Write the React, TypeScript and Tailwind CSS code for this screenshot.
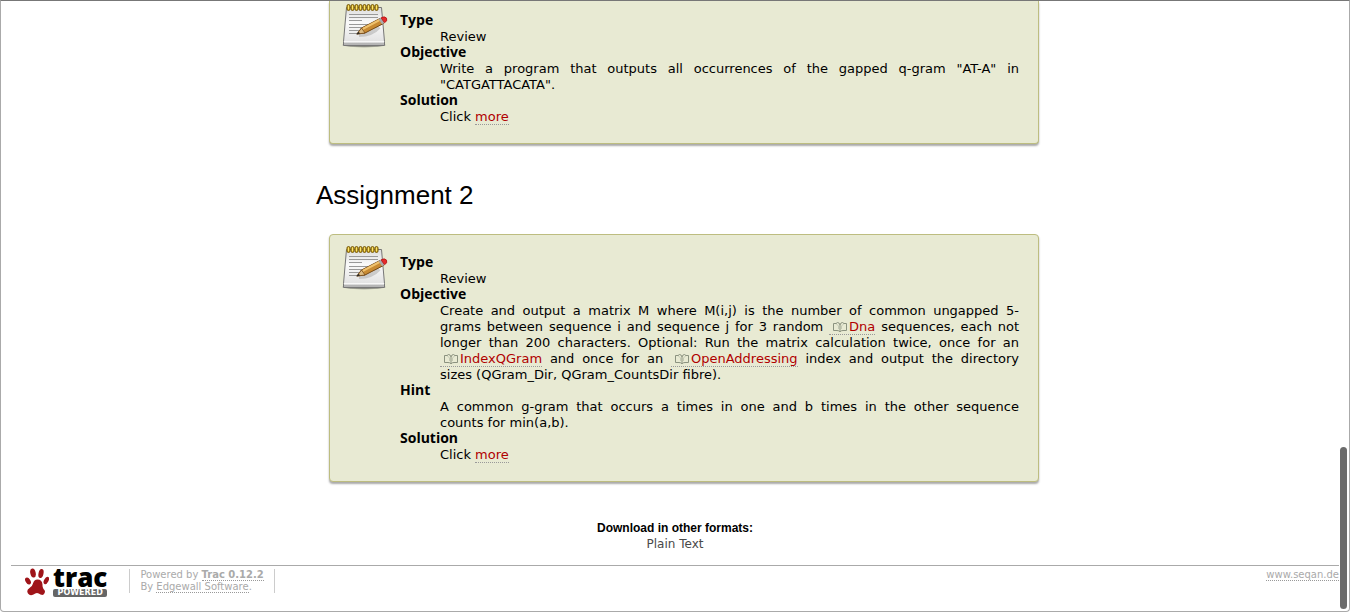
import React from "react";

const linkClass = "border-b border-dotted border-[#999] text-[#b00000]";

function NotepadIcon() {
  return (
    <svg className="h-12 w-12 shrink-0" viewBox="0 0 48 48" aria-hidden="true">
      <defs>
        <linearGradient id="paper" x1="0" y1="0" x2="0" y2="1">
          <stop offset="0" stopColor="#dcdcdc" />
          <stop offset="0.4" stopColor="#fafafa" />
          <stop offset="1" stopColor="#dedede" />
        </linearGradient>
        <radialGradient id="shade">
          <stop offset="0" stopColor="#222" stopOpacity="0.8" />
          <stop offset="0.8" stopColor="#444" stopOpacity="0.4" />
          <stop offset="1" stopColor="#555" stopOpacity="0" />
        </radialGradient>
      </defs>
      <ellipse cx="24" cy="42" rx="23" ry="2.8" fill="url(#shade)" />
      <path d="M6.5 4.500H41.500L44.500 38.500V42.500H3.500V38.500Z" fill="url(#paper)" stroke="#777" />
      <path d="M4 39.500H44V42H4Z" fill="#b5b5b5" />
      <path d="M4 38.800H44" stroke="#fff" />
      <path d="M9 11.500H38M9 14.500H38M9 17.500H22M9 21.500H36M9 24.500H32M9 27.500H24M9 30.500H18" stroke="#999" />
      <path d="M19 32Q32 32 39 24" stroke="#777" strokeOpacity=".3" strokeWidth="4" fill="none" />
      <path d="M17 31L21.500 25L40 15.500L43.500 20.500L25 30Z" fill="#c88a32" stroke="#704411" />
      <path d="M22.500 26L39.500 17" stroke="#efc16d" strokeWidth="2" />
      <path d="M17 31L21.500 25L25 30Z" fill="#dfbc80" stroke="#704411" strokeWidth=".7" />
      <path d="M16 31.500L18.800 28.700L20 30.500Z" fill="#222" />
      <path d="M38.500 16L41 14.800L44.500 19.800L42 21.300Z" fill="#aaa" />
      <path d="M41 14.800Q44.500 12.800 46.500 15Q48 18 44.500 19.800Z" fill="#e52a2a" stroke="#a11" strokeWidth=".7" />
      {[6, 10, 14, 18, 22, 26, 30, 34].map((x) => (
        <g key={x}>
          <rect x={x + 1} y="1.500" width="3" height="6" rx="1.500" fill="#e1ba28" stroke="#72560a" />
          <path d={`M${x + 2.5} 2.500V6`} stroke="#fff08b" strokeWidth=".8" />
        </g>
      ))}
    </svg>
  );
}

function BookIcon() {
  return (
    <svg className="mr-0.5 ml-1 inline-block h-3 w-3.5 align-[-2px]" viewBox="0 0 14 12" fill="none" aria-hidden="true">
      <path
        d="M7 10.500V4Q6.500 1.500 4.500 1.500Q3.500 1.500 3.500 2.500H.5V9.500H4Q6 9.500 7 10.800Q8 9.500 10 9.500H13.500V2.500H10.500Q10.500 1.500 9.500 1.500Q7.500 1.500 7 4"
        stroke="#8b927f"
      />
      <path d="M3.500 3L5.500 5V8M10.500 3L8.500 5V8" stroke="#c4c9b4" />
    </svg>
  );
}

function DocLink({ children }: { children: string }) {
  return (
    <a href="#" className={`${linkClass} whitespace-nowrap`}>
      <BookIcon />
      {children}
    </a>
  );
}

function Line({ children }: { children: React.ReactNode }) {
  return <span className="block [text-align-last:justify]">{children}</span>;
}

function Entry({ term, children }: { term: string; children: React.ReactNode }) {
  return (
    <>
      <dt className="-mt-px mb-px font-['Open_Sans',sans-serif] text-sm leading-4 font-bold">{term}</dt>
      <dd className="ml-10">{children}</dd>
    </>
  );
}

function PawLogo() {
  return (
    <a href="#" aria-label="Trac Powered" className="flex h-9 items-start">
      <svg className="mt-[2px] h-7 w-6 shrink-0" viewBox="0 0 24 28" fill="#9f1419" aria-hidden="true">
        <ellipse cx="8" cy="5" rx="2.700" ry="4.600" transform="rotate(-12 8 5)" />
        <ellipse cx="16" cy="5.500" rx="2.500" ry="4.600" transform="rotate(12 16 5.500)" />
        <ellipse cx="3" cy="13" rx="2.400" ry="3.800" transform="rotate(-32 3 13)" />
        <ellipse cx="21.300" cy="12.500" rx="2.200" ry="4" transform="rotate(28 21.300 12.500)" />
        <path d="M12.500 11.500Q9 11.500 8 15.500Q7.500 18 4.500 20Q1 22 3 25.500Q5 28.500 8.500 26.500Q12 23.500 15.500 26.500Q19 28 19.800 24.500Q20.500 22.500 18.500 21Q17.300 19.500 17.500 16.500Q17 11.500 12.500 11.500Z" />
      </svg>
      <span className="ml-1 flex flex-col">
        <span className="-mt-px font-['Open_Sans',sans-serif] text-[26px] leading-6 font-extrabold text-black">trac</span>
        <span className="rounded-xs bg-[#666] text-center text-[8px] leading-2 font-bold text-white">
          POWERED
        </span>
      </span>
    </a>
  );
}

export default function App() {
  return (
    <div className="relative flex min-h-screen flex-col overflow-hidden rounded-b border border-[#aaa] border-t-[#777] bg-white font-['DejaVu_Sans',Verdana,sans-serif] text-[13px] leading-4 text-black">
      <main className="mx-auto w-full max-w-[754px] pl-[18px]">
        <section className="mx-[13px] flex rounded-b border border-t-0 border-[#bdbd80] bg-[#e8ead3] pt-3 pr-[19px] pb-[18px] pl-[10px] shadow-[0_2px_2px_#aaa]">
          <div className="-mt-2.5 mr-3"><NotepadIcon /></div>
          <dl className="min-w-0 flex-1 text-justify">
            <Entry term="Type">Review</Entry>
            <Entry term="Objective">
              Write a program that outputs all occurrences of the gapped q-gram "AT-A" in "CATGATTACATA".
            </Entry>
            <Entry term="Solution">Click <a href="#" className={linkClass}>more</a></Entry>
          </dl>
        </section>
        <h1 className="mt-9 mb-6 font-['Liberation_Sans',Arial,sans-serif] text-[26px] leading-[30px]">Assignment 2</h1>
        <section className="mx-[13px] flex rounded border border-[#bdbd80] bg-[#e8ead3] pt-5 pr-[19px] pb-[18px] pl-[10px] shadow-[0_2px_2px_#aaa]">
          <div className="-mt-2.5 mr-3"><NotepadIcon /></div>
          <dl className="min-w-0 flex-1 text-justify">
            <Entry term="Type">Review</Entry>
            <Entry term="Objective">
              <Line>Create and output a matrix M where M(i,j) is the number of common ungapped 5-</Line>
              <Line>grams between sequence i and sequence j for 3 random <DocLink>Dna</DocLink> sequences, each not</Line>
              <Line>longer than 200 characters. Optional: Run the matrix calculation twice, once for an</Line>
              <Line><DocLink>IndexQGram</DocLink> and once for an <DocLink>OpenAddressing</DocLink> index and output the directory</Line>
              sizes (QGram_Dir, QGram_CountsDir fibre).
            </Entry>
            <Entry term="Hint">
              <Line>A common g-gram that occurs a times in one and b times in the other sequence</Line>
              counts for min(a,b).
            </Entry>
            <Entry term="Solution">Click <a href="#" className={linkClass}>more</a></Entry>
          </dl>
        </section>
      </main>
      <section className="mt-[38px] text-center">
        <h2 className="font-['Liberation_Sans',Arial,sans-serif] text-xs leading-4 font-bold">Download in other formats:</h2>
        <a href="#" className="block text-xs leading-4 text-[#494949]">Plain Text</a>
      </section>
      <footer className="mx-[10px] mt-[13px] flex items-start border-t border-[#aaa] text-[10px] leading-3 text-[#aaa]">
        <div className="pl-[14px]"><PawLogo /></div>
        <p className="mt-[3px] ml-[22px] border-x border-[#ccc] px-[10px]">
          Powered by <a href="#" className="border-b border-dotted border-[#999] font-bold">Trac 0.12.2</a>
          <br />
          By <a href="#" className="border-b border-dotted border-[#999]">Edgewall Software</a>.
        </p>
        <p className="mt-[3px] ml-auto"><a href="#" className="border-b border-dotted border-[#999]">www.seqan.de</a></p>
      </footer>
      <div className="absolute right-[2px] bottom-[2px] h-[162px] w-[7px] rounded-full bg-[#6b6b6b]" />
    </div>
  );
}
